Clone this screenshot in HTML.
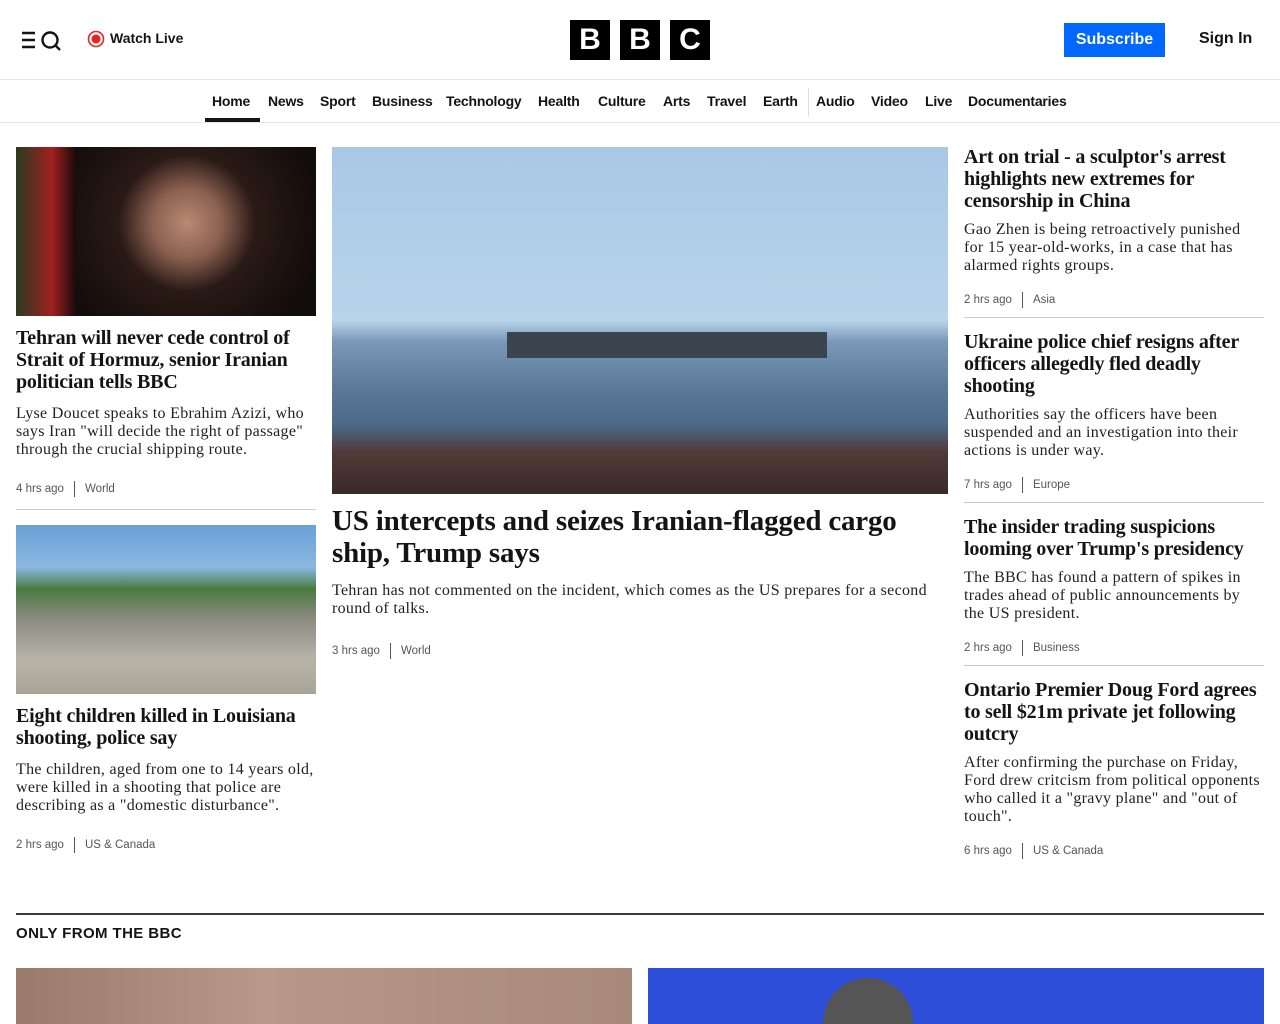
<!DOCTYPE html>
<html><head><meta charset="utf-8"><style>
*{margin:0;padding:0;box-sizing:border-box}
body{width:1280px;height:1024px;overflow:hidden;background:#fff;font-family:"Liberation Sans",sans-serif;color:#141414}
.top{height:80px;position:relative;border-bottom:1px solid #e6e6e6}
.nav{height:43px;border-bottom:1px solid #e6e6e6;position:relative}
.nav a{position:absolute;top:13px;font-size:14px;font-weight:bold;color:#141414;text-decoration:none;letter-spacing:-0.2px}
.logo{position:absolute;left:570px;top:20px;display:flex;gap:10px}
.logo div{width:40px;height:40px;background:#000;color:#fff;font-weight:bold;font-size:30px;text-align:center;line-height:40px}
.col{position:absolute;top:147px}
h2{font-family:"Liberation Serif",serif;font-size:20px;line-height:22px;font-weight:bold;color:#141414;letter-spacing:-0.2px}
p{font-family:"Liberation Serif",serif;font-size:16px;line-height:18px;color:#202224;letter-spacing:0.3px}
.meta{font-size:11.5px;color:#545658;display:flex;align-items:center}
.meta span.b{display:inline-block;width:1px;height:16px;background:#545658;margin:0 10px}
.sep{border-top:1px solid #ccc}
</style></head><body>
<div class="top">
<svg style="position:absolute;left:22px;top:31px" width="40" height="20" viewBox="0 0 40 20"><g stroke="#141414" stroke-width="2.4" fill="none"><path d="M0 2h13M0 9h13M0 16h13"/><circle cx="28" cy="9" r="7.5"/><path d="M33 14l5 5"/></g></svg>
<svg style="position:absolute;left:87px;top:30px" width="18" height="18"><circle cx="9" cy="9" r="7.5" fill="none" stroke="#e6231e" stroke-width="1.6"/><circle cx="9" cy="9" r="4.5" fill="#e6231e"/></svg>
<span style="position:absolute;left:110px;top:30px;font-size:14px;font-weight:bold">Watch Live</span>
<div class="logo"><div>B</div><div>B</div><div>C</div></div>
<div style="position:absolute;left:1064px;top:23px;width:101px;height:34px;background:#0068ff;color:#fff;font-weight:bold;font-size:16px;text-align:center;line-height:34px">Subscribe</div>
<span style="position:absolute;left:1199px;top:30px;font-size:16px;font-weight:bold">Sign In</span>
</div>
<div class="nav">
<a style="left:212px">Home</a><div style="position:absolute;left:205px;top:38px;width:55px;height:4px;background:#141414"></div>
<a style="left:268px">News</a><a style="left:320px">Sport</a><a style="left:372px">Business</a><a style="left:446px">Technology</a><a style="left:538px">Health</a><a style="left:598px">Culture</a><a style="left:663px">Arts</a><a style="left:707px">Travel</a><a style="left:763px">Earth</a>
<div style="position:absolute;left:808px;top:8px;width:1px;height:28px;background:#ddd"></div>
<a style="left:816px">Audio</a><a style="left:871px">Video</a><a style="left:925px">Live</a><a style="left:968px">Documentaries</a>
</div>

<div class="col" style="left:16px;width:300px">
<div style="height:169px;background:radial-gradient(circle at 57% 45%,#b88a72 0,#8a6050 18%,#2a1a16 35%,#120c0a 70%),#111;position:relative"><div style="position:absolute;left:0;top:0;width:60px;height:169px;background:linear-gradient(90deg,#2a3a20,#a02020 60%,#1a0a0a)"></div></div>
<h2 style="margin-top:11px">Tehran will never cede control of Strait of Hormuz, senior Iranian politician tells BBC</h2>
<p style="margin-top:12px">Lyse Doucet speaks to Ebrahim Azizi, who says Iran "will decide the right of passage" through the crucial shipping route.</p>
<div class="meta" style="margin-top:22px">4 hrs ago<span class="b"></span>World</div>
<div class="sep" style="margin-top:12px"></div>
<div style="margin-top:15px;height:169px;background:linear-gradient(180deg,#6aa0d8 0,#8ab8e0 25%,#4a7a40 38%,#8a8a80 55%,#b8b4a8 80%,#a8a498 100%)"></div>
<h2 style="margin-top:11px">Eight children killed in Louisiana shooting, police say</h2>
<p style="margin-top:12px">The children, aged from one to 14 years old, were killed in a shooting that police are describing as a "domestic disturbance".</p>
<div class="meta" style="margin-top:22px">2 hrs ago<span class="b"></span>US &amp; Canada</div>
</div>

<div class="col" style="left:332px;width:616px">
<div style="height:347px;background:linear-gradient(180deg,#a8c8e6 0,#b8d4ea 50%,#7a98b8 56%,#5a7898 70%,#4a6a88 80%,#503a38 88%,#3a2a28 100%);position:relative"><div style="position:absolute;left:175px;top:185px;width:320px;height:26px;background:#3a4550"></div></div>
<h2 style="margin-top:11px;font-size:29px;line-height:32px">US intercepts and seizes Iranian-flagged cargo ship, Trump says</h2>
<p style="margin-top:13px">Tehran has not commented on the incident, which comes as the US prepares for a second round of talks.</p>
<div class="meta" style="margin-top:25px">3 hrs ago<span class="b"></span>World</div>
</div>

<div class="col" style="left:964px;width:300px;top:146px">
<h2>Art on trial - a sculptor's arrest highlights new extremes for censorship in China</h2>
<p style="margin-top:9px">Gao Zhen is being retroactively punished for 15 year-old-works, in a case that has alarmed rights groups.</p>
<div class="meta" style="margin-top:17px">2 hrs ago<span class="b"></span>Asia</div>
<div class="sep" style="margin-top:9px"></div>
<h2 style="margin-top:13px">Ukraine police chief resigns after officers allegedly fled deadly shooting</h2>
<p style="margin-top:9px">Authorities say the officers have been suspended and an investigation into their actions is under way.</p>
<div class="meta" style="margin-top:17px">7 hrs ago<span class="b"></span>Europe</div>
<div class="sep" style="margin-top:9px"></div>
<h2 style="margin-top:13px">The insider trading suspicions looming over Trump's presidency</h2>
<p style="margin-top:9px">The BBC has found a pattern of spikes in trades ahead of public announcements by the US president.</p>
<div class="meta" style="margin-top:17px">2 hrs ago<span class="b"></span>Business</div>
<div class="sep" style="margin-top:9px"></div>
<h2 style="margin-top:13px">Ontario Premier Doug Ford agrees to sell $21m private jet following outcry</h2>
<p style="margin-top:9px">After confirming the purchase on Friday, Ford drew critcism from political opponents who called it a "gravy plane" and "out of touch".</p>
<div class="meta" style="margin-top:17px">6 hrs ago<span class="b"></span>US &amp; Canada</div>
</div>

<div style="position:absolute;left:16px;top:913px;width:1248px;height:2px;background:#3a3a3a"></div>
<div style="position:absolute;left:16px;top:925px;font-size:15px;font-weight:bold;letter-spacing:0.4px">ONLY FROM THE BBC</div>
<div style="position:absolute;left:16px;top:968px;width:616px;height:56px;background:linear-gradient(90deg,#9a7a6a,#b89888 40%,#a88a7a)"></div>
<div style="position:absolute;left:648px;top:968px;width:616px;height:56px;background:#2c4ed8"><div style="position:absolute;left:175px;top:10px;width:90px;height:46px;background:#555;border-radius:45px 45px 0 0"></div></div>
</body></html>
